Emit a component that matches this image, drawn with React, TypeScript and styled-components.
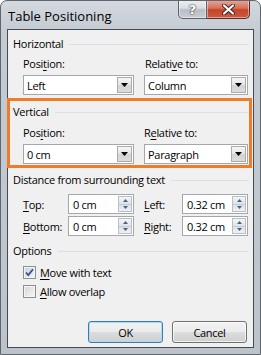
import React from "react";
import styled, { createGlobalStyle } from "styled-components";

const GlobalStyle = createGlobalStyle`
  html, body {
    margin: 0;
    padding: 0;
    background: #ffffff;
  }
  body {
    font-family: "Open Sans", "Noto Sans", "Liberation Sans", sans-serif;
    font-size: 11px;
    letter-spacing: -0.3px;
    color: #000000;
  }
`;

const Window = styled.div`
  width: 261px;
  height: 355px;
  box-sizing: border-box;
  display: flex;
  flex-direction: column;
  background: linear-gradient(#d3d9df, #c4cbd2 30px, #bcc3ca);
  border: 1px solid #5f666d;
  border-radius: 7px 7px 0 0;
  overflow: hidden;
`;

const TitleBar = styled.div`
  height: 28px;
  display: flex;
  align-items: flex-start;
  flex-shrink: 0;
`;

const Title = styled.div`
  flex: 1;
  padding: 6px 0 0 7px;
  line-height: 18px;
  font-size: 13px;
  letter-spacing: 0;
  color: #000000;
`;

const CaptionButtons = styled.div`
  display: flex;
  margin: -1px 10px 0 0;
`;

const CaptionButton = styled.div<{ $close?: boolean }>`
  width: ${(p) => (p.$close ? "43px" : "29px")};
  height: 19px;
  box-sizing: border-box;
  display: flex;
  align-items: center;
  justify-content: center;
  border: 1px solid ${(p) => (p.$close ? "#5b2a22" : "#5c6269")};
  border-top: none;
  border-left: ${(p) => (p.$close ? "none" : undefined)};
  border-radius: ${(p) => (p.$close ? "0 0 5px 0" : "0 0 0 5px")};
  background: ${(p) =>
    p.$close
      ? "linear-gradient(#e9a99b, #d6705c 45%, #c3442c 55%, #cf5a3e)"
      : "linear-gradient(#eef0f2, #d9dde1 45%, #b8bec5 55%, #c9ced3)"};
  box-shadow: inset 0 0 0 1px rgba(255, 255, 255, 0.45);
  color: #ffffff;
  font-family: "DejaVu Sans", sans-serif;
  font-weight: bold;
  font-size: 13px;
  letter-spacing: 0;
  text-shadow: 0 0 2px #2f3438, 0 0 1px #2f3438;
`;

const Client = styled.div`
  margin: 0 6px 6px 6px;
  height: 319px;
  box-sizing: border-box;
  border: 1px solid #444a50;
  background: #f0f0f0;
  display: flex;
  flex-direction: column;
`;

const GroupHeader = styled.div<{ $top: number; $inset: number; $end: number }>`
  display: flex;
  align-items: center;
  height: 14px;
  line-height: 14px;
  gap: 6px;
  margin-top: ${(p) => p.$top}px;
  padding: 0 ${(p) => p.$end}px 0 ${(p) => p.$inset}px;
  white-space: nowrap;
`;

const HeaderLine = styled.div`
  flex: 1;
  height: 1px;
  background: #d9dfe4;
`;

const TwoCol = styled.div<{ $top: number; $left: number; $right: number }>`
  display: grid;
  grid-template-columns: 111px 104px;
  column-gap: 10px;
  row-gap: 2px;
  margin-top: ${(p) => p.$top}px;
  padding: 0 ${(p) => p.$right}px 0 ${(p) => p.$left}px;
`;

const FieldLabel = styled.div<{ $shift?: number }>`
  height: 14px;
  line-height: 14px;
  padding-left: ${(p) => p.$shift ?? 0}px;
  white-space: nowrap;
`;

const Key = styled.span`
  text-decoration: underline;
  text-underline-offset: 2px;
`;

const Combo = styled.div`
  height: 20px;
  margin-top: 2px;
  box-sizing: border-box;
  border: 1px solid #a4a7ad;
  background: #ffffff;
  display: flex;
  align-items: center;
  padding: 0 1px 0 3px;
`;

const Value = styled.span`
  flex: 1;
  white-space: nowrap;
`;

const DropButton = styled.div`
  width: 15px;
  height: 16px;
  box-sizing: border-box;
  border: 1px solid #a9abaf;
  background: linear-gradient(#f6f6f6, #e4e4e4 50%, #d3d3d3 51%, #dcdcdc);
  display: flex;
  align-items: center;
  justify-content: center;
`;

const Highlight = styled.div`
  margin: 3px 1px 0 -1px;
  border: 3px solid #ee7d2b;
  padding-bottom: 1px;
`;

const SpinField = styled.div`
  display: flex;
  height: 20px;
  align-items: center;
`;

const SpinLabel = styled.div<{ $width: number }>`
  width: ${(p) => p.$width}px;
  flex-shrink: 0;
  white-space: nowrap;
`;

const SpinBox = styled.div`
  flex: 1;
  height: 20px;
  box-sizing: border-box;
  border: 1px solid #a4a7ad;
  background: #ffffff;
  display: flex;
  align-items: center;
  padding: 0 1px 0 4px;
`;

const Spinner = styled.div`
  width: 14px;
  height: 16px;
  box-sizing: border-box;
  border: 1px solid #b9bfc7;
  display: flex;
  flex-direction: column;
`;

const SpinHalf = styled.div<{ $down?: boolean }>`
  flex: 1;
  display: flex;
  align-items: center;
  justify-content: center;
  background: ${(p) =>
    p.$down
      ? "linear-gradient(#dde2e8, #eef1f4)"
      : "linear-gradient(#f3f5f7, #dfe4ea)"};
  border-top: ${(p) => (p.$down ? "1px solid #c5cbd3" : "none")};
`;

const CheckRow = styled.label<{ $top: number }>`
  display: flex;
  align-items: center;
  gap: 4px;
  height: 14px;
  margin-top: ${(p) => p.$top}px;
  padding-left: 15px;
  white-space: nowrap;
`;

const Box = styled.span<{ $checked?: boolean }>`
  width: 13px;
  height: 13px;
  box-sizing: border-box;
  border: 1px solid #8e8f8f;
  background: ${(p) =>
    p.$checked
      ? "linear-gradient(135deg, #c2d0ea, #f2f6fc)"
      : "linear-gradient(135deg, #d6d6d6, #f7f7f7)"};
  box-shadow: inset 0 0 0 1px #f4f4f4;
  display: flex;
  align-items: center;
  justify-content: center;
`;

const ButtonRow = styled.div`
  display: flex;
  justify-content: flex-end;
  gap: 9px;
  margin-top: 23px;
  padding-right: 6px;
`;

const PushButton = styled.div<{ $default?: boolean }>`
  width: 75px;
  height: 22px;
  box-sizing: border-box;
  border: 1px solid ${(p) => (p.$default ? "#3d7bad" : "#707070")};
  border-radius: 3px;
  background: linear-gradient(#f2f2f2, #ebebeb 50%, #dddddd 51%, #cfcfcf);
  box-shadow: inset 0 0 0 1px
    ${(p) => (p.$default ? "#a9dcf6" : "rgba(255,255,255,0.7)")};
  display: flex;
  align-items: center;
  justify-content: center;
`;

const DownArrow = () => (
  <svg width="7" height="4" viewBox="0 0 7 4">
    <path d="M0 0h7L3.5 4z" fill="#000" />
  </svg>
);

const SmallArrow = ({ up }: { up?: boolean }) => (
  <svg width="5" height="3" viewBox="0 0 5 3">
    <path d={up ? "M0 3h5L2.5 0z" : "M0 0h5L2.5 3z"} fill="#4c607f" />
  </svg>
);

const ComboField = ({ value }: { value: string }) => (
  <Combo>
    <Value>{value}</Value>
    <DropButton>
      <DownArrow />
    </DropButton>
  </Combo>
);

const Spin = ({
  label,
  keyChar,
  width,
  value,
}: {
  label: string;
  keyChar: string;
  width: number;
  value: string;
}) => (
  <SpinField>
    <SpinLabel $width={width}>
      <Key>{keyChar}</Key>
      {label}
    </SpinLabel>
    <SpinBox>
      <Value>{value}</Value>
      <Spinner>
        <SpinHalf>
          <SmallArrow up />
        </SpinHalf>
        <SpinHalf $down>
          <SmallArrow />
        </SpinHalf>
      </Spinner>
    </SpinBox>
  </SpinField>
);

const Check = () => (
  <svg width="9" height="9" viewBox="0 0 9 9">
    <path
      d="M1 4.5l2.3 2.5L8 1.2"
      fill="none"
      stroke="#3b4f80"
      strokeWidth="1.8"
    />
  </svg>
);

const CloseGlyph = () => (
  <svg width="13" height="11" viewBox="0 0 13 11">
    <path
      d="M2 1.5l9 8M11 1.5l-9 8"
      stroke="#3a2420"
      strokeWidth="4"
      strokeLinecap="round"
    />
    <path
      d="M2 1.5l9 8M11 1.5l-9 8"
      stroke="#ffffff"
      strokeWidth="2.2"
      strokeLinecap="round"
    />
  </svg>
);

export default function App() {
  return (
    <>
      <GlobalStyle />
      <Window>
        <TitleBar>
          <Title>Table Positioning</Title>
          <CaptionButtons>
            <CaptionButton>?</CaptionButton>
            <CaptionButton $close>
              <CloseGlyph />
            </CaptionButton>
          </CaptionButtons>
        </TitleBar>
        <Client>
          <GroupHeader $top={7} $inset={5} $end={4}>
            Horizontal
            <HeaderLine />
          </GroupHeader>
          <TwoCol $top={6} $left={15} $right={5}>
            <FieldLabel>
              Posi<Key>t</Key>ion:
            </FieldLabel>
            <FieldLabel $shift={1}>
              Relati<Key>v</Key>e to:
            </FieldLabel>
            <ComboField value="Left" />
            <ComboField value="Column" />
          </TwoCol>

          <Highlight>
            <GroupHeader $top={4} $inset={3} $end={0}>
              Vertical
              <HeaderLine />
            </GroupHeader>
            <TwoCol $top={7} $left={13} $right={1}>
              <FieldLabel>
                Pos<Key>i</Key>tion:
              </FieldLabel>
              <FieldLabel>
                R<Key>e</Key>lative to:
              </FieldLabel>
              <ComboField value="0 cm" />
              <ComboField value="Paragraph" />
            </TwoCol>
          </Highlight>

          <GroupHeader $top={5} $inset={5} $end={4}>
            Distance from surrounding text
            <HeaderLine />
          </GroupHeader>
          <TwoCol $top={7} $left={15} $right={5}>
            <Spin keyChar="T" label="op:" width={45} value="0 cm" />
            <Spin keyChar="L" label="eft:" width={38} value="0.32 cm" />
            <Spin keyChar="B" label="ottom:" width={45} value="0 cm" />
            <Spin keyChar="R" label="ight:" width={38} value="0.32 cm" />
          </TwoCol>

          <GroupHeader $top={8} $inset={5} $end={4}>
            Options
            <HeaderLine />
          </GroupHeader>
          <CheckRow $top={7}>
            <Box $checked>
              <Check />
            </Box>
            <span>
              <Key>M</Key>ove with text
            </span>
          </CheckRow>
          <CheckRow $top={5}>
            <Box />
            <span>
              <Key>A</Key>llow overlap
            </span>
          </CheckRow>

          <ButtonRow>
            <PushButton $default>OK</PushButton>
            <PushButton>Cancel</PushButton>
          </ButtonRow>
        </Client>
      </Window>
    </>
  );
}
